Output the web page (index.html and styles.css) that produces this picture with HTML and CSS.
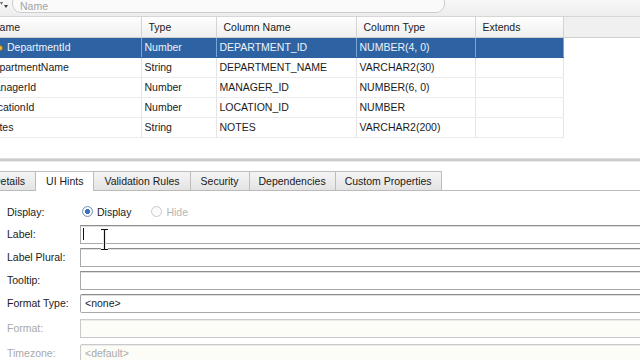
FILE: index.html
```html
<!DOCTYPE html>
<html lang="en">
<head>
  <meta charset="UTF-8" />
  <title>Entity Attributes - UI Hints</title>
  <link rel="stylesheet" href="styles.css">
</head>
<body>
  <div class="toolbar">
    <svg class="filter-icon" width="10" height="10" viewBox="0 0 10 10">
      <path d="M0 1 L3 1 L1.5 4 Z" fill="#6a6a6a"/>
      <path d="M4 4 L8 4 L6 7 Z" fill="#3c3c3c"/>
    </svg>
    <div class="search">Name</div>
  </div>

  <table class="attrs">
    <colgroup>
      <col style="width:161px"><col style="width:75px"><col style="width:140px">
      <col style="width:119px"><col style="width:88px"><col>
    </colgroup>
    <thead>
      <tr>
        <th class="first">Name</th>
        <th>Type</th>
        <th>Column Name</th>
        <th>Column Type</th>
        <th>Extends</th>
        <th class="filler"></th>
      </tr>
    </thead>
    <tbody>
      <tr class="selected">
        <td class="key-cell">
          <svg class="key" width="10" height="8" viewBox="0 0 10 8">
            <circle cx="7" cy="4" r="2.6" fill="#e0b94a" stroke="#8a6a1c" stroke-width="0.8"/>
            <rect x="0" y="3.4" width="5" height="1.4" fill="#c89b2c"/>
          </svg>DepartmentId
        </td>
        <td>Number</td>
        <td>DEPARTMENT_ID</td>
        <td>NUMBER(4, 0)</td>
        <td></td>
        <td class="filler"></td>
      </tr>
      <tr>
        <td class="first">DepartmentName</td>
        <td>String</td>
        <td>DEPARTMENT_NAME</td>
        <td>VARCHAR2(30)</td>
        <td></td>
        <td class="filler"></td>
      </tr>
      <tr>
        <td class="first">ManagerId</td>
        <td>Number</td>
        <td>MANAGER_ID</td>
        <td>NUMBER(6, 0)</td>
        <td></td>
        <td class="filler"></td>
      </tr>
      <tr>
        <td class="first">LocationId</td>
        <td>Number</td>
        <td>LOCATION_ID</td>
        <td>NUMBER</td>
        <td></td>
        <td class="filler"></td>
      </tr>
      <tr>
        <td class="first">Notes</td>
        <td>String</td>
        <td>NOTES</td>
        <td>VARCHAR2(200)</td>
        <td></td>
        <td class="filler"></td>
      </tr>
    </tbody>
  </table>

  <div class="splitter"></div>

  <div class="tabs">
    <div class="tab">Details</div>
    <div class="tab active">UI Hints</div>
    <div class="tab">Validation Rules</div>
    <div class="tab">Security</div>
    <div class="tab">Dependencies</div>
    <div class="tab">Custom Properties</div>
  </div>

  <div class="form">
    <div class="row display-row">
      <span class="label">Display:</span>
      <span class="radio checked"></span><span class="radio-text">Display</span>
      <span class="radio off"></span><span class="radio-text off">Hide</span>
    </div>
    <div class="row first-field">
      <span class="label">Label:</span>
      <div class="field"><span class="caret"></span></div>
    </div>
    <div class="row">
      <span class="label">Label Plural:</span>
      <div class="field"></div>
    </div>
    <div class="row">
      <span class="label">Tooltip:</span>
      <div class="field"></div>
    </div>
    <div class="row">
      <span class="label">Format Type:</span>
      <div class="field combo">&lt;none&gt;</div>
    </div>
    <div class="row wide">
      <span class="label off">Format:</span>
      <div class="field disabled"></div>
    </div>
    <div class="row wide">
      <span class="label off">Timezone:</span>
      <div class="field disabled combo">&lt;default&gt;</div>
    </div>
  </div>

  <!-- mouse pointer over the Label field -->
  <svg class="ibeam" width="11" height="24" viewBox="0 0 11 24">
    <path d="M2 1.5 H9 M5.5 1.5 V21.5 M2 21.5 H9" stroke="#fff" stroke-width="3" fill="none"/>
    <path d="M2 1.5 H9 M5.5 1.5 V21.5 M2 21.5 H9" stroke="#111" stroke-width="1.2" fill="none"/>
  </svg>
</body>
</html>
```

FILE: styles.css
```css
html, body {
  margin: 0;
  padding: 0;
}
body {
  width: 640px;
  height: 360px;
  overflow: hidden;
  position: relative;
  background-color: #fff;
  font-family: "Liberation Sans", Arial, sans-serif;
  font-size: 10.5px;
  color: #1b1b1b;
}

/* filter bar */
.toolbar {
  height: 17px;
  display: flex;
  align-items: flex-start;
  background: linear-gradient(#f8f8f8, #ededed);
  border-bottom: 1px solid #d6d6d6;
  box-sizing: border-box;
  overflow: hidden;
}
.filter-icon {
  flex: none;
  margin: 1px 0 0 0;
}
.search {
  flex: none;
  width: 433px;
  height: 20px;
  margin: -7px 0 0 2px;
  padding: 7px 0 0 7px;
  box-sizing: border-box;
  border: 1px solid #cdcdcd;
  border-radius: 9px;
  background-color: #fafafa;
  color: #a3a3a3;
  line-height: 10px;
}

/* attribute table */
.attrs {
  width: 660px;
  margin-left: -20px;
  table-layout: fixed;
  border-collapse: collapse;
}
.attrs th,
.attrs td {
  height: 20px;
  padding: 0 3px;
  box-sizing: border-box;
  text-align: left;
  font-weight: normal;
  white-space: nowrap;
  overflow: hidden;
}
.attrs th {
  padding: 0 7px;
  background: linear-gradient(#fefefe, #efefef);
  border-right: 1px solid #d3d3d3;
  border-bottom: 1px solid #cfcfcf;
}
.attrs th.first {
  padding-left: 12px;
}
.attrs th.filler {
  background: #f0f0f0;
  border-right: none;
}
.attrs td {
  border-right: 1px solid #e4e4e4;
  border-bottom: 1px solid #ececec;
}
.attrs td.first {
  padding-left: 6px;
}
.attrs td.filler {
  border: none;
  background: #fff;
}
.attrs tr.selected td {
  background-color: #2d63a3;
  color: #eef3fb;
  border-right-color: #79a5d8;
  border-bottom-color: #2d63a3;
}
.attrs tr.selected td.filler {
  background: #fff;
}
.key-cell {
  padding-left: 13px !important;
}
.key {
  vertical-align: -1px;
  margin-right: 4px;
}

.splitter {
  margin-top: 20px;
  height: 2px;
  background-color: #cbcbcb;
  border-top: 1px solid #dedede;
  border-bottom: 1px solid #ececec;
}

/* tab strip */
.tabs {
  display: flex;
  margin: 9px 0 0 -18px;
  height: 20px;
  border-bottom: 1px solid #bbbbbb;
  box-sizing: border-box;
}
.tab {
  flex: none;
  height: 19px;
  line-height: 19px;
  padding: 0 10px;
  margin-right: -1px;
  border: 1px solid #bdbdbd;
  border-bottom: none;
  box-sizing: border-box;
  background: linear-gradient(#f5f5f5, #e3e3e3);
  color: #202020;
}
.tab.active {
  height: 20px;
  background: #fff;
  position: relative;
  z-index: 1;
}
.tab:nth-child(n+5) {
  padding: 0 9px;
}

/* ui hints form */
.form {
  padding-left: 7px;
}
.row {
  display: flex;
  align-items: center;
  height: 19px;
  margin-top: 4px;
}
.row.wide {
  margin-top: 6px;
}
.row.display-row {
  height: 14px;
  margin-top: 14px;
}
.row.first-field {
  margin-top: 6px;
}
.label {
  flex: none;
  width: 73px;
}
.label.off {
  color: #a9a9a9;
}
.radio {
  flex: none;
  width: 11px;
  height: 11px;
  margin-left: 2px;
  border-radius: 50%;
  box-sizing: border-box;
  border: 1px solid #7a93b3;
  background: radial-gradient(circle at 40% 35%, #ffffff, #dde3ea);
}
.radio.checked {
  background: radial-gradient(circle, #3d6fbf 0 2.3px, #ffffff 2.6px, #dce2ea);
}
.radio.off {
  margin-left: 20px;
  border-color: #c9c9c9;
  background: #fbfbfb;
}
.radio-text {
  margin-left: 4px;
}
.radio-text.off {
  color: #b6b6b6;
}
.field {
  flex: none;
  width: 600px;
  height: 19px;
  box-sizing: border-box;
  border: 1px solid #a9a9a9;
  border-top-color: #8d8d8d;
  box-shadow: inset 0 1px 0 #dedede;
  background-color: #fff;
  display: flex;
  align-items: center;
  padding-left: 2px;
}
.field.combo {
  padding-left: 4px;
  border-radius: 2px 0 0 2px;
}
.field.disabled {
  border-color: #cacaca;
  box-shadow: inset 0 1px 0 #ececec;
  background-color: #fdfdf8;
  color: #a9a9a9;
}
.caret {
  width: 1px;
  height: 12px;
  background-color: #111;
}

.ibeam {
  position: absolute;
  left: 99px;
  top: 228px;
}
```
